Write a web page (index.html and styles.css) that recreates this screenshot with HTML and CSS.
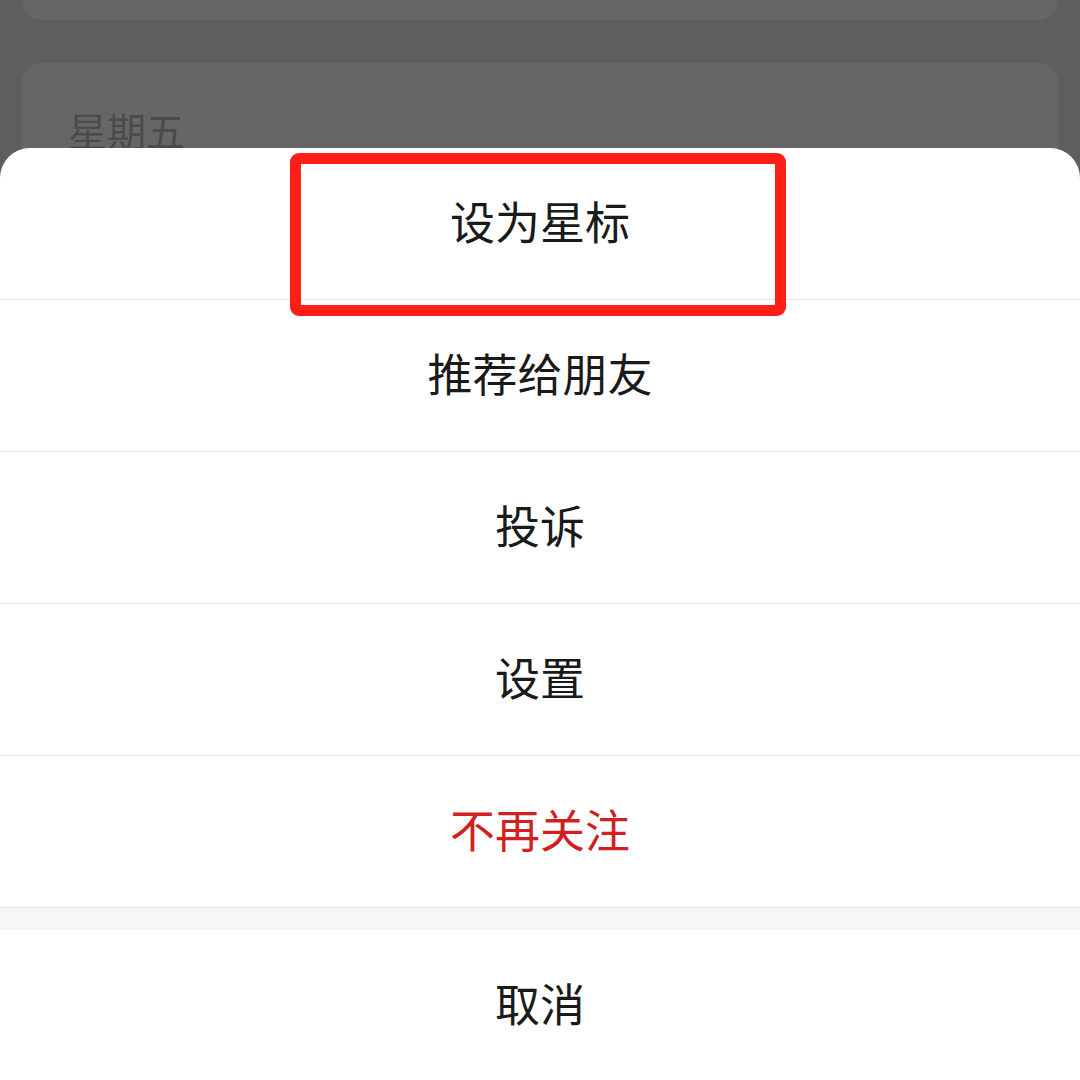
FILE: index.html
```html
<!DOCTYPE html>
<html lang="zh-CN">
<head>
<meta charset="utf-8">
<title>Action sheet</title>
<link rel="stylesheet" href="styles.css">
</head>
<body>
<div class="bg">
  <div class="card card-top"></div>
  <div class="card card-day">
    <div class="day">星期五</div>
  </div>
</div>
<div class="sheet">
  <div class="item">设为星标</div>
  <div class="item">推荐给朋友</div>
  <div class="item">投诉</div>
  <div class="item">设置</div>
  <div class="item danger">不再关注</div>
  <div class="spacer"></div>
  <div class="item cancel">取消</div>
</div>
<div class="highlight"></div>
</body>
</html>
```
FILE: styles.css
```css
html, body {
  margin: 0;
  padding: 0;
}
body {
  width: 1080px;
  height: 1080px;
  overflow: hidden;
  background: #5e5e5e;
  font-family: "Noto Sans CJK SC", "Noto Sans", sans-serif;
  position: relative;
}
.bg {
  display: flex;
  flex-direction: column;
  gap: 43px;
  padding: 0 22px;
}
.card {
  background: #666666;
  border-radius: 20px;
}
.card-top {
  height: 20px;
  border-radius: 0 0 20px 20px;
}
.card-day {
  height: 200px;
  padding: 38px 0 0 46px;
  box-sizing: border-box;
}
.day {
  font-size: 39px;
  line-height: 56px;
  color: #4b4b4b;
}
.sheet {
  position: absolute;
  left: 0;
  right: 0;
  top: 148px;
  bottom: 0;
  background: #ffffff;
  border-radius: 30px 30px 0 0;
  display: flex;
  flex-direction: column;
  overflow: hidden;
}
.item {
  height: 151px;
  box-sizing: border-box;
  padding-bottom: 6px;
  flex: none;
  display: flex;
  align-items: center;
  justify-content: center;
  font-size: 45px;
  color: #1a1a1a;
  border-bottom: 1px solid #e6e6e6;
}
.item:not(.cancel) {
  height: 152px;
}
.danger {
  color: #d21f1f;
}
.spacer {
  height: 22px;
  flex: none;
  background: #f6f6f6;
}
.cancel {
  border-bottom: none;
  height: 150px;
}
.highlight {
  position: absolute;
  left: 290px;
  top: 153px;
  width: 496px;
  height: 163px;
  box-sizing: border-box;
  border: 11px solid #ff1f17;
  border-radius: 9px;
}
```
